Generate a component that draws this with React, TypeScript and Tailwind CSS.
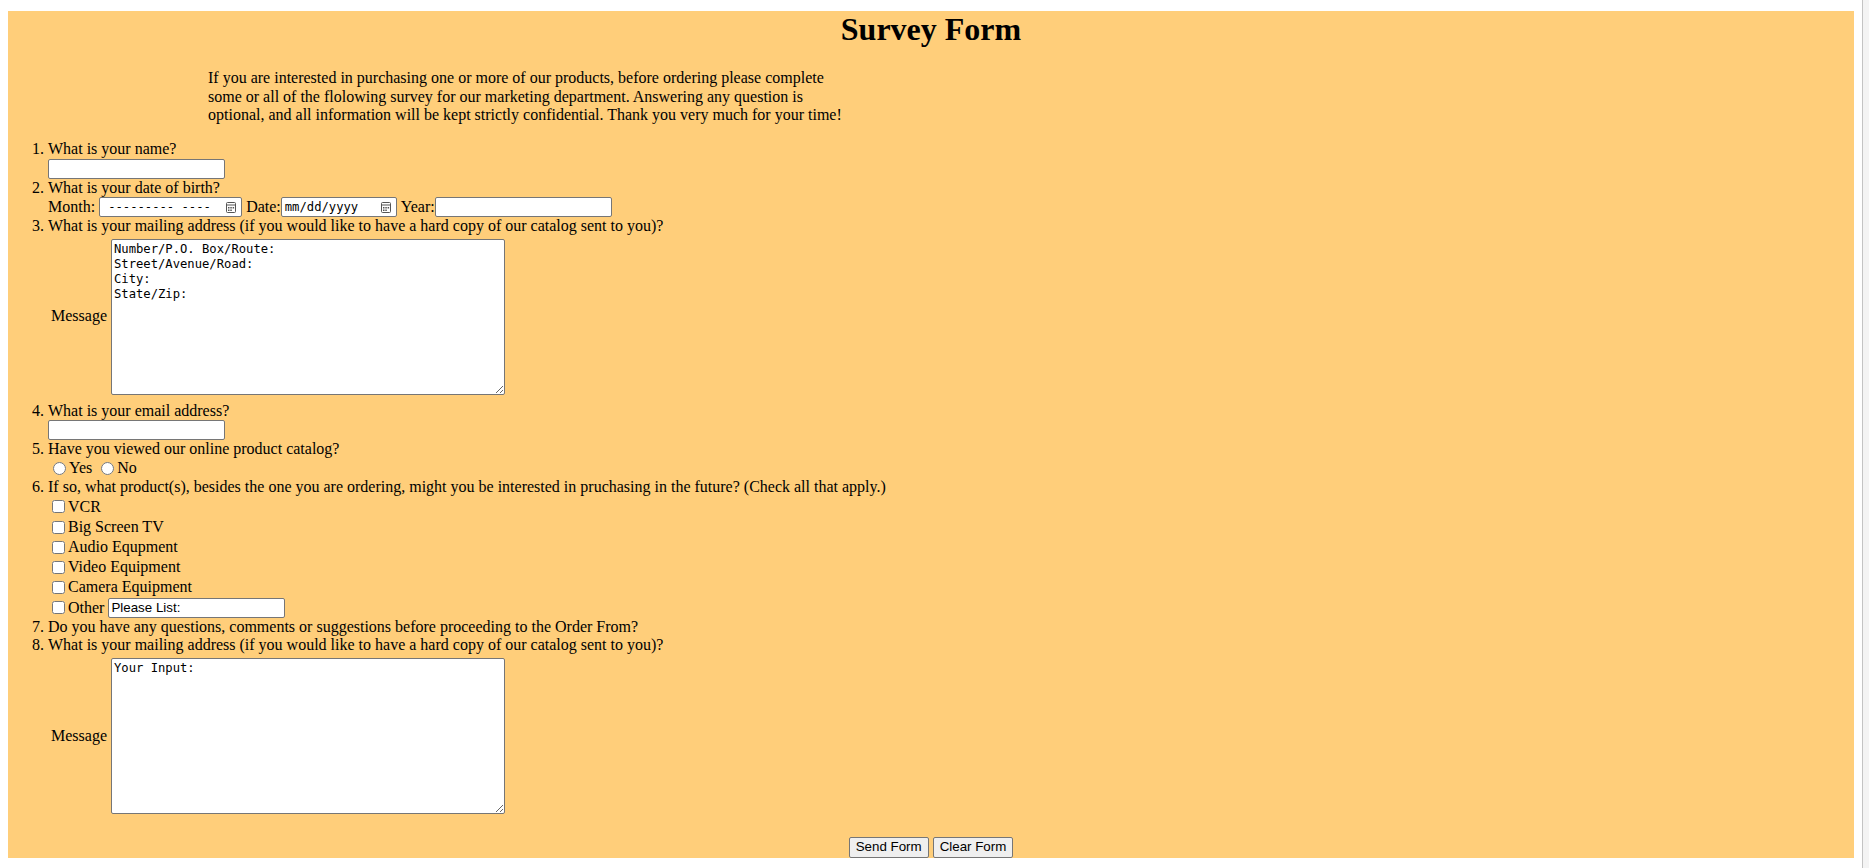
const field =
  "h-[20px] w-[177px] rounded-[2px] border border-[#767676] bg-white px-[2px] text-[13.33px] leading-[16px] font-['Liberation_Sans',Arial,sans-serif]";
const area =
  "h-[156px] w-[394px] rounded-[2px] border border-[#767676] bg-white p-[2px] text-[12.2px] leading-[15.2px] font-['DejaVu_Sans_Mono',monospace]";
const button =
  "h-[21px] rounded-[2px] border border-[#767676] bg-[#efefef] px-[6px] text-[13.33px] leading-[16px] font-['Liberation_Sans',Arial,sans-serif]";

const products = ["VCR", "Big Screen TV", "Audio Equpment", "Video Equipment", "Camera Equipment"];

function CalendarIcon() {
  return (
    <svg width="10" height="11" viewBox="0 0 10 11" className="shrink-0">
      <rect x="0.5" y="0.5" width="9" height="10" rx="1" fill="none" stroke="#555" />
      <line x1="0.5" y1="3" x2="9.5" y2="3" stroke="#555" />
      <rect x="2" y="5" width="1.5" height="1.5" fill="#555" />
      <rect x="4.3" y="5" width="1.5" height="1.5" fill="#555" />
      <rect x="6.6" y="5" width="1.5" height="1.5" fill="#555" />
      <rect x="2" y="7.5" width="1.5" height="1.5" fill="#555" />
      <rect x="4.3" y="7.5" width="1.5" height="1.5" fill="#555" />
    </svg>
  );
}

function DateBox({ text, className }: { text: string; className: string }) {
  return (
    <div
      className={`flex h-[20px] items-center justify-between rounded-[2px] border border-[#767676] bg-white pr-[5px] text-[12.2px] text-black font-['DejaVu_Sans_Mono',monospace] ${className}`}
    >
      <span className="whitespace-pre">{text}</span>
      <CalendarIcon />
    </div>
  );
}

function MessageBox({ value }: { value: string }) {
  return (
    <div className="flex items-center pb-[7px] pl-[3px] pt-[3px]">
      <span className="pr-[4px]">Message</span>
      <textarea className={area} defaultValue={value} />
    </div>
  );
}

export default function App() {
  return (
    <div className="flex h-[868px] w-full bg-white text-[16px] leading-[18.4px] text-black font-['Liberation_Serif','Times_New_Roman',serif]">
      <div className="flex-1 px-[8px] pt-[11px]">
        <form className="flex h-[847px] flex-col bg-[#ffce7a]" onSubmit={(e) => e.preventDefault()}>
          <h1 className="text-center text-[32px] font-bold leading-[36.8px]">Survey Form</h1>
          <p className="ml-[200px] mt-[21.4px] w-[645px]">
            If you are interested in purchasing one or more of our products, before ordering please complete
            some or all of the flolowing survey for our marketing department. Answering any question is
            optional, and all information will be kept strictly confidential. Thank you very much for your time!
          </p>

          <ol className="mt-[16px] list-decimal pl-[40px]">
            <li>
              <div>What is your name?</div>
              <div className="h-[20px]">
                <input type="text" className={field} />
              </div>
            </li>
            <li>
              <div>What is your date of birth?</div>
              <div className="flex h-[20px] items-center">
                <span className="mr-[4px]">Month:</span>
                <DateBox text="--------- ----" className="w-[143px] pl-[8px]" />
                <span className="ml-[4px]">Date:</span>
                <DateBox text="mm/dd/yyyy" className="w-[116px] pl-[3px]" />
                <span className="ml-[4px]">Year:</span>
                <input type="text" className={field} />
              </div>
            </li>
            <li>
              <div>What is your mailing address (if you would like to have a hard copy of our catalog sent to you)?</div>
              <MessageBox value={"Number/P.O. Box/Route:\nStreet/Avenue/Road:\nCity:\nState/Zip:"} />
            </li>
            <li>
              <div>What is your email address?</div>
              <div className="h-[20px]">
                <input type="email" className={field} />
              </div>
            </li>
            <li>
              <div>Have you viewed our online product catalog?</div>
              <div className="flex h-[20px] items-center">
                <input type="radio" name="viewed" className="ml-[5px] mr-[3px]" />
                <span>Yes</span>
                <input type="radio" name="viewed" className="ml-[9px] mr-[3px]" />
                <span>No</span>
              </div>
            </li>
            <li>
              <div>
                If so, what product(s), besides the one you are ordering, might you be interested in pruchasing in the
                future? (Check all that apply.)
              </div>
              {products.map((p) => (
                <div key={p} className="flex h-[20.2px] items-center">
                  <input type="checkbox" className="ml-[4px] mr-[3px]" />
                  <span>{p}</span>
                </div>
              ))}
              <div className="flex h-[20.2px] items-center">
                <input type="checkbox" className="ml-[4px] mr-[3px]" />
                <span className="mr-[4px]">Other</span>
                <input type="text" className={field} defaultValue="Please List:" />
              </div>
            </li>
            <li>
              <div>Do you have any questions, comments or suggestions before proceeding to the Order From?</div>
            </li>
            <li>
              <div>What is your mailing address (if you would like to have a hard copy of our catalog sent to you)?</div>
              <MessageBox value="Your Input:" />
            </li>
          </ol>

          <div className="mt-[16px] flex justify-center gap-[4px]">
            <button type="submit" className={button}>
              Send Form
            </button>
            <button type="reset" className={button}>
              Clear Form
            </button>
          </div>
        </form>
      </div>
      <div className="w-[7px] border-l border-[#c4c4c4] bg-[#f4f4f4]" />
    </div>
  );
}
